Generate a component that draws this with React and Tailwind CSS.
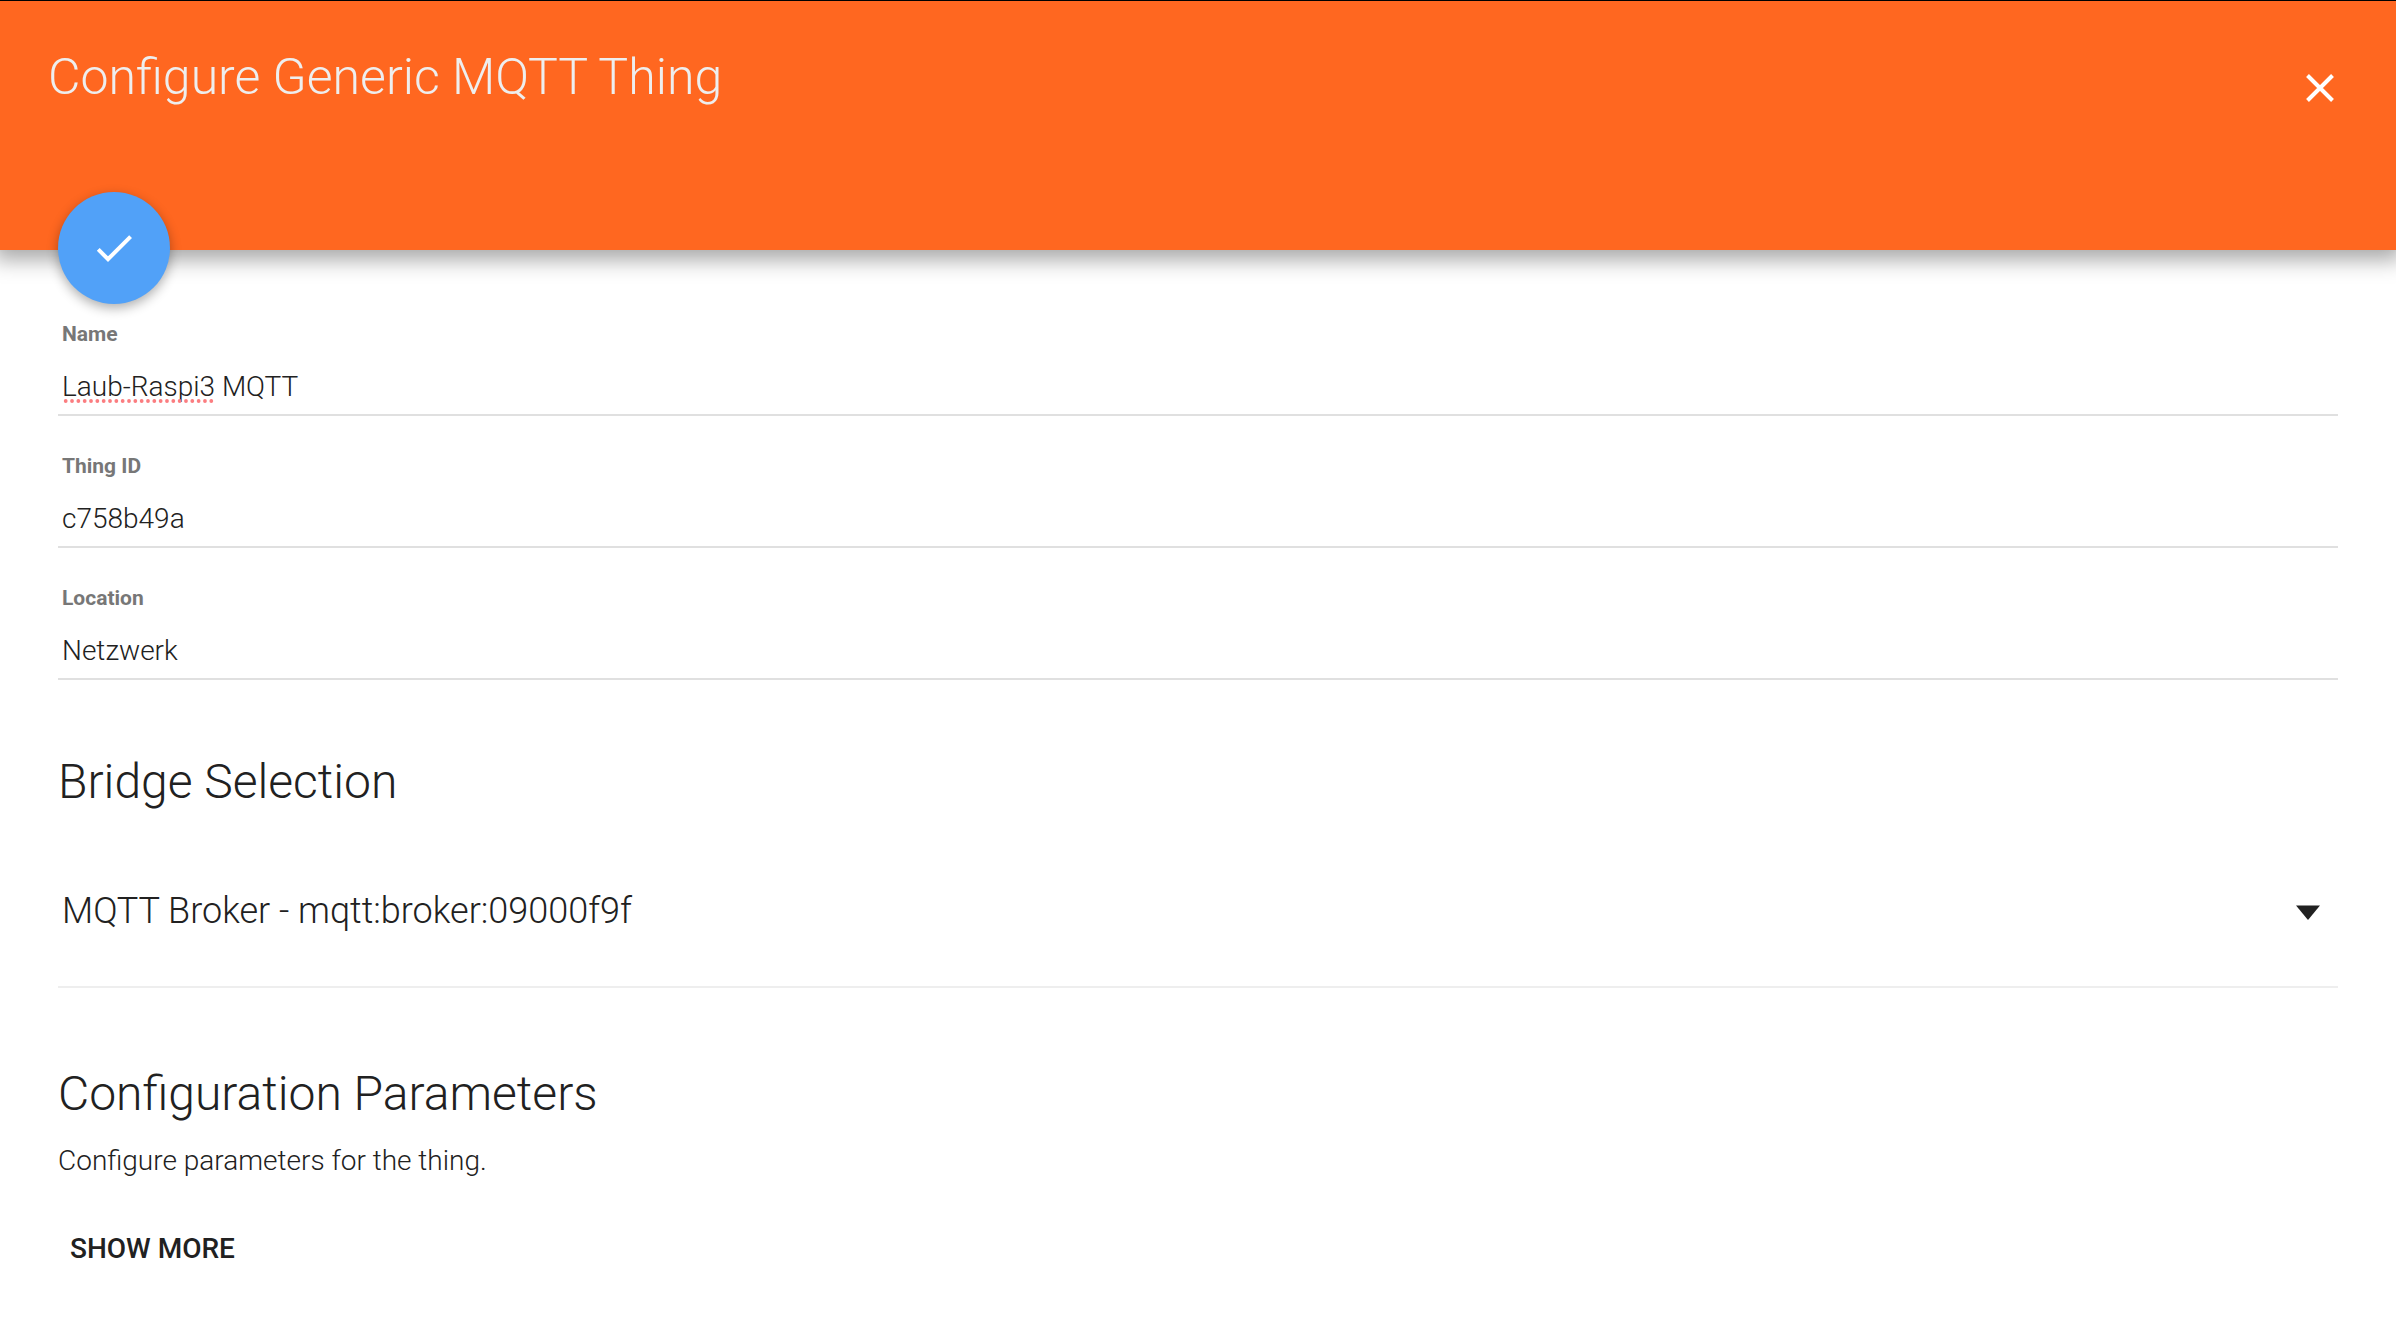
import React, { useState } from 'react';

const TextField = ({ id, label, value, onChange, children }) => (
  <div className="relative">
    <label
      htmlFor={id}
      className="block px-1 text-[21px] leading-7 font-bold text-[#777]"
    >
      {label}
    </label>
    <input
      id={id}
      type="text"
      spellCheck={false}
      value={value}
      onChange={onChange}
      className="block h-17 w-full border-b-2 border-[#e0e0e0] px-1 pt-2.5 text-[28px] font-light outline-none"
    />
    {children}
  </div>
);

// Dotted underline of an unknown word
const SpellingMark = () => (
  <svg
    aria-hidden="true"
    className="pointer-events-none absolute bottom-3 left-1 h-1.5 w-38"
    viewBox="0 0 152 6"
  >
    <path
      d="M3.7 3H150"
      fill="none"
      stroke="#fb7d80"
      strokeWidth="3.8"
      strokeLinecap="round"
      strokeDasharray="0 6.33"
    />
  </svg>
);

const App = () => {
  const [thing, setThing] = useState({
    name: 'Laub-Raspi3 MQTT',
    thingId: 'c758b49a',
    location: 'Netzwerk',
  });
  const [bridge, setBridge] = useState('mqtt:broker:09000f9f');

  const handleChange = (key) => (e) =>
    setThing({ ...thing, [key]: e.target.value });

  return (
    <div className="min-h-screen overflow-x-hidden bg-white font-['Roboto',sans-serif] text-[#212121]">
      <header className="relative flex h-[250px] items-start justify-between border-t border-black bg-[#ff6720] pt-9 pr-[58px] pl-12 shadow-[0_4px_20px_6px_rgba(0,0,0,0.34)]">
        <h1 className="pt-2 text-[50px] leading-16 font-light text-[#eee]">
          Configure Generic MQTT Thing
        </h1>
        <button
          type="button"
          aria-label="Close"
          className="mt-8 flex size-9 items-center justify-center"
        >
          <svg className="size-9" viewBox="0 0 36 36" aria-hidden="true">
            <path
              d="M5.5 6.5L30.5 31.5M30.5 6.5L5.5 31.5"
              fill="none"
              stroke="#fff"
              strokeWidth="4"
            />
          </svg>
        </button>
        <button
          type="button"
          aria-label="Save"
          className="absolute -bottom-[54px] left-[58px] flex size-28 items-center justify-center rounded-full bg-[#51a1f8] shadow-[0_4px_12px_rgba(0,0,0,0.32)]"
        >
          <svg className="size-12" viewBox="0 0 24 24" aria-hidden="true">
            <path
              d="M9 16.17L4.83 12l-1.42 1.41L9 19 21 7l-1.41-1.41z"
              fill="#fff"
            />
          </svg>
        </button>
      </header>

      <main className="px-[58px] pt-[70px] pb-12">
        <form className="flex flex-col gap-9">
          <TextField
            id="name"
            label="Name"
            value={thing.name}
            onChange={handleChange('name')}
          >
            {thing.name.startsWith('Laub-Raspi3') && <SpellingMark />}
          </TextField>
          <TextField
            id="thing-id"
            label="Thing ID"
            value={thing.thingId}
            onChange={handleChange('thingId')}
          />
          <TextField
            id="location"
            label="Location"
            value={thing.location}
            onChange={handleChange('location')}
          />
        </form>

        <section className="pt-[70px]">
          <h2 id="bridge-title" className="text-[48px] leading-16 font-light">
            Bridge Selection
          </h2>
          <div className="relative mt-5">
            <select
              aria-labelledby="bridge-title"
              value={bridge}
              onChange={(e) => setBridge(e.target.value)}
              className="block h-[154px] w-full appearance-none border-b-2 border-[#eee] px-1 pt-0.5 text-[36px] font-light outline-none"
            >
              <option value="mqtt:broker:09000f9f">
                MQTT Broker - mqtt:broker:09000f9f
              </option>
            </select>
            <svg
              aria-hidden="true"
              className="pointer-events-none absolute top-[71px] right-4.5 h-4 w-6"
              viewBox="0 0 24 16"
            >
              <path d="M0 .5H24L12 15z" fill="#212121" />
            </svg>
          </div>
        </section>

        <section className="pt-[74px]">
          <h2 className="text-[48px] leading-16 font-light">
            Configuration Parameters
          </h2>
          <p className="mt-[15px] text-[28px] leading-10 font-light">
            Configure parameters for the thing.
          </p>
          <button
            type="button"
            className="mt-8 h-18 px-3 text-[28px] font-medium uppercase"
          >
            Show more
          </button>
        </section>
      </main>
    </div>
  );
};

export default App;
